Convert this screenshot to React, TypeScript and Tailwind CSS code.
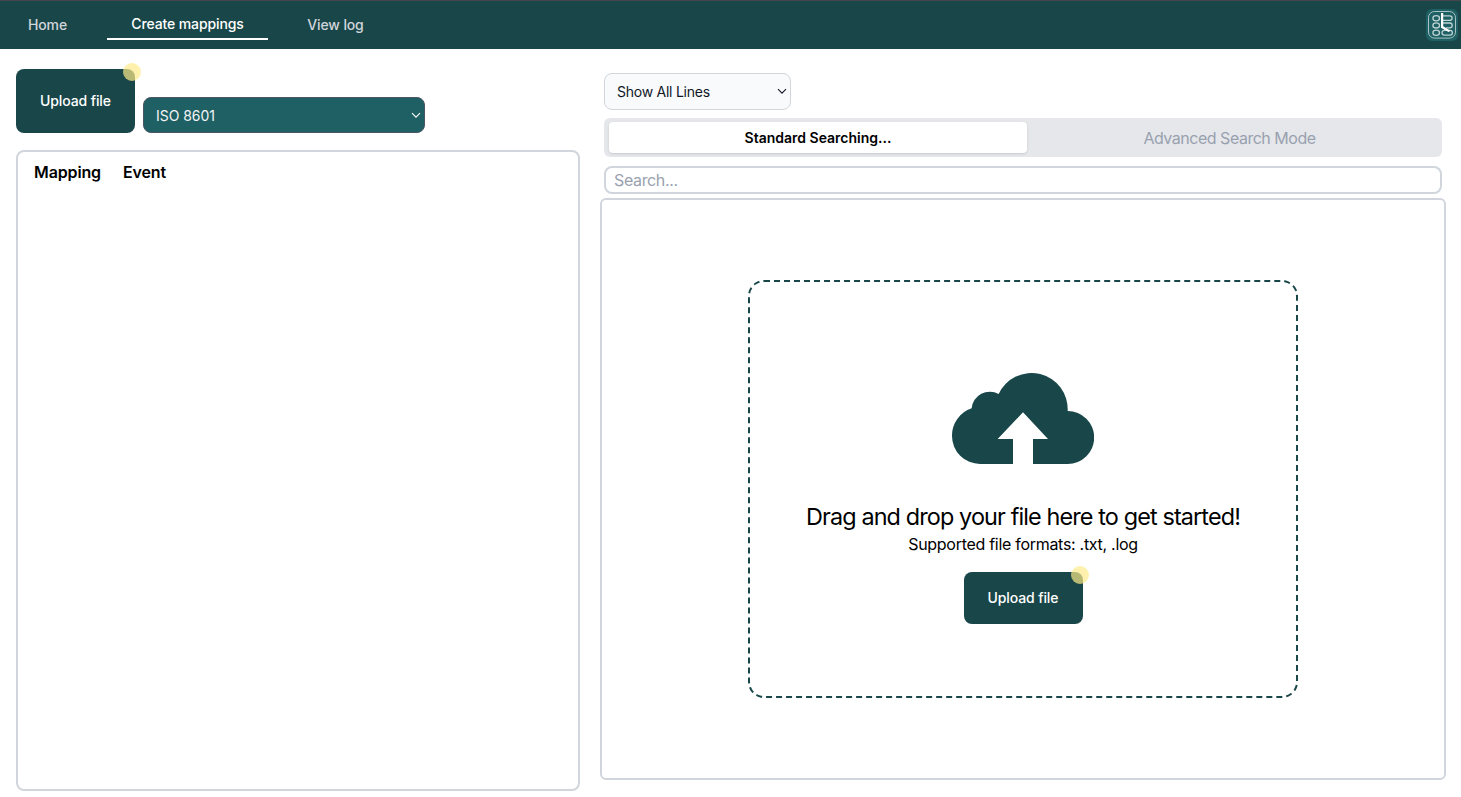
import React from "react";

function Chevron({ className }: { className: string }) {
  return (
    <svg className={className} width="10" height="7" viewBox="0 0 10 7" fill="none" stroke="currentColor" strokeWidth="1.1">
      <path d="M1 1.2 L5 5.2 L9 1.2" />
    </svg>
  );
}

function Logo() {
  return (
    <svg width="32" height="32" viewBox="0 0 32 32" fill="none">
      <rect width="32" height="32" rx="6" fill="#1e6063" />
      <rect x="2.5" y="2.5" width="27" height="26.6" rx="6" stroke="#a9c4c5" />
      <g stroke="#bdd2d3" strokeWidth="1.3">
        <ellipse cx="10.2" cy="9.2" rx="3.3" ry="2.6" />
        <ellipse cx="10.2" cy="16.4" rx="3.3" ry="2.6" />
        <ellipse cx="10.2" cy="23.8" rx="3.3" ry="2.6" />
        <path d="M16 6.8 H23.8 A2.3 2.3 0 0 1 23.8 11.4 H16" />
        <path d="M16 14 H23.8 A2.4 2.4 0 0 1 23.8 18.8 H20" />
        <rect x="16" y="21.4" width="10.4" height="4.8" rx="2.4" />
      </g>
      <path d="M15 4 H17.2 V17.2 L24.5 21.8 L22.5 23 L15 18.8 Z" fill="#fff" />
    </svg>
  );
}

function CloudUpload() {
  return (
    <svg width="142" height="91" viewBox="66 39 426 273" fill="#194749">
      <path d="M150 312 A84 84 0 0 1 66 228 A86 86 0 0 1 125 145 A54.5 54.5 0 0 1 206 102 A108.6 108.6 0 0 1 413 153 A79.5 79.5 0 0 1 413 312 H309 V237 H354 L279 157 L203 237 H249 V312 Z" />
    </svg>
  );
}

function UploadButton({ className }: { className: string }) {
  return (
    <button className={`relative w-[119px] rounded-lg bg-[#194749] text-sm font-medium tracking-[-0.12px] text-white ${className}`}>
      Upload file
      <span className="absolute -right-[6px] -top-[6px] size-[18px] rounded-full bg-[#fdea8a]/70" />
    </button>
  );
}

export default function App() {
  return (
    <div className="flex h-[797px] w-[1461px] flex-col overflow-hidden bg-white font-['Inter',sans-serif] text-black">
      <nav className="flex h-[49px] shrink-0 items-start border-t border-[#45464b] bg-[#194749] text-sm font-medium">
        <a className="ml-1 w-[87px] pt-[14px] text-center tracking-[-0.08px] text-gray-300">Home</a>
        <a className="ml-4 h-[39px] w-[161px] border-b-2 border-white pt-[13px] text-center tracking-[-0.12px] text-white">Create mappings</a>
        <a className="ml-4 w-[103px] pt-[14px] text-center tracking-[-0.14px] text-gray-300">View log</a>
        <div className="ml-auto mr-[3px] pt-2">
          <Logo />
        </div>
      </nav>
      <main className="flex grow pl-4">
        <section className="flex w-[564px] flex-col">
          <div className="mt-5 flex h-16 items-end gap-2">
            <UploadButton className="h-16" />
            <div className="flex h-9 w-[282px] items-center justify-between rounded-lg border border-gray-600 bg-[#1e6063] pl-3 pr-[3px] text-sm text-gray-100">
              <span className="pt-px tracking-[-0.05px]">ISO 8601</span>
              <Chevron className="text-white" />
            </div>
          </div>
          <div className="mt-[17px] flex h-[641px] gap-[22px] rounded-lg border-2 border-gray-300 px-4 pt-2 text-base font-semibold tracking-[-0.13px]">
            <span>Mapping</span>
            <span>Event</span>
          </div>
        </section>
        <section className="ml-5 flex w-[846px] flex-col">
          <div className="flex flex-col px-1">
            <div className="mt-6 flex h-[37px] w-[187px] items-center justify-between rounded-lg border border-gray-300 bg-gray-50 pl-3 pr-[3px] text-sm text-gray-900">
              <span className="tracking-[-0.25px]">Show All Lines</span>
              <Chevron className="text-gray-900" />
            </div>
            <div className="mt-2 flex h-[39px] items-center rounded-md bg-gray-200 pl-[5px] pr-1">
              <div className="flex h-[31px] w-[418px] items-center justify-center rounded bg-white text-sm font-semibold shadow">Standard Searching...</div>
              <div className="grow pr-[6px] text-center text-base tracking-[-0.48px] text-gray-400">Advanced Search Mode</div>
            </div>
            <div className="mt-[9px] flex h-7 items-center rounded-lg border-2 border-gray-300 px-2 text-base tracking-[-0.36px] text-gray-400">Search...</div>
          </div>
          <div className="mt-1 flex h-[582px] items-center justify-center rounded-md border-2 border-gray-300">
            <div className="flex h-[418px] w-[550px] flex-col items-center rounded-2xl border-2 border-dashed border-[#194749] pt-[91px]">
              <CloudUpload />
              <h1 className="mt-[37px] text-[23.4px] leading-8 tracking-[-0.87px]">Drag and drop your file here to get started!</h1>
              <p className="-mt-px text-base leading-6 tracking-[-0.29px]">Supported file formats: .txt, .log</p>
              <UploadButton className="mt-4 h-[52px]" />
            </div>
          </div>
        </section>
      </main>
    </div>
  );
}
